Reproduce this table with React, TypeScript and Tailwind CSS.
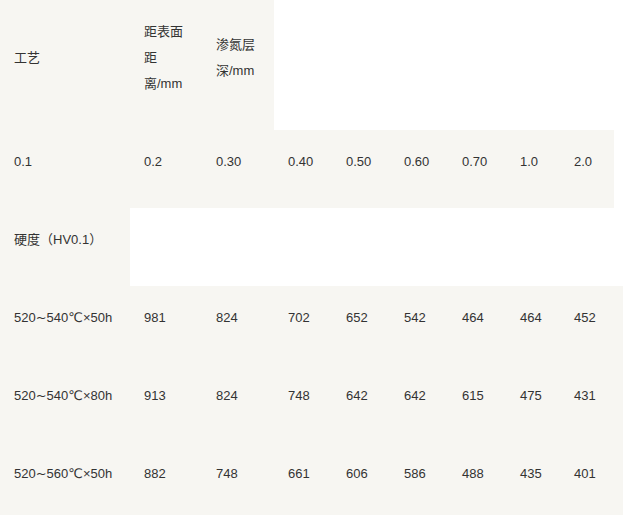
import React from "react";

const font = { fontFamily: '"Liberation Sans", Arial, "Noto Sans CJK SC", sans-serif' };
const dv = { fontFamily: '"DejaVu Sans", sans-serif' };

const rows = [
  ["520~540℃×50h", "981", "824", "702", "652", "542", "464", "464", "452"],
  ["520~540℃×80h", "913", "824", "748", "642", "642", "615", "475", "431"],
  ["520~560℃×50h", "882", "748", "661", "606", "586", "488", "435", "401"],
];

const depths = ["0.1", "0.2", "0.30", "0.40", "0.50", "0.60", "0.70", "1.0", "2.0"];

const td = "bg-[#f7f6f2] px-[14px] pt-[19px] pb-[33px] align-middle text-left font-normal";

function Label({ text }: { text: string }) {
  const [a, rest] = text.split("~");
  const [b, c] = rest.split("℃");
  return (
    <>
      {a}
      <span style={dv}>~</span>
      {b}
      <span style={dv}>℃</span>
      {c}
    </>
  );
}

export default function App() {
  return (
    <div className="w-[623px] h-[515px] overflow-hidden bg-white text-[13px] leading-[26px] text-[#333333]" style={font}>
      <table className="table-fixed border-collapse w-[623px]">
        <colgroup>
          <col className="w-[130px]" />
          <col className="w-[72px]" />
          <col className="w-[72px]" />
          <col className="w-[58px]" />
          <col className="w-[58px]" />
          <col className="w-[58px]" />
          <col className="w-[58px]" />
          <col className="w-[54px]" />
          <col className="w-[54px]" />
          <col className="w-[9px]" />
        </colgroup>
        <tbody>
          <tr>
            <td className={td}>工艺</td>
            <td className={td}>
              距表面
              <br />
              距
              <br />
              离/mm
            </td>
            <td className={td}>
              渗氮层
              <br />
              深/mm
            </td>
            <td colSpan={7}></td>
          </tr>
          <tr>
            {depths.map((d, i) => (
              <td key={i} className={td}>
                {d}
              </td>
            ))}
            <td></td>
          </tr>
          <tr>
            <td className={td + " whitespace-nowrap"}>硬度（HV0.1）</td>
            <td colSpan={9}></td>
          </tr>
          {rows.map((r, ri) => (
            <tr key={ri}>
              {r.map((c, ci) => (
                <td key={ci} className={td + " whitespace-nowrap"}>
                  {ci === 0 ? <Label text={c} /> : c}
                </td>
              ))}
              <td className="bg-[#f7f6f2]"></td>
            </tr>
          ))}
        </tbody>
      </table>
    </div>
  );
}
